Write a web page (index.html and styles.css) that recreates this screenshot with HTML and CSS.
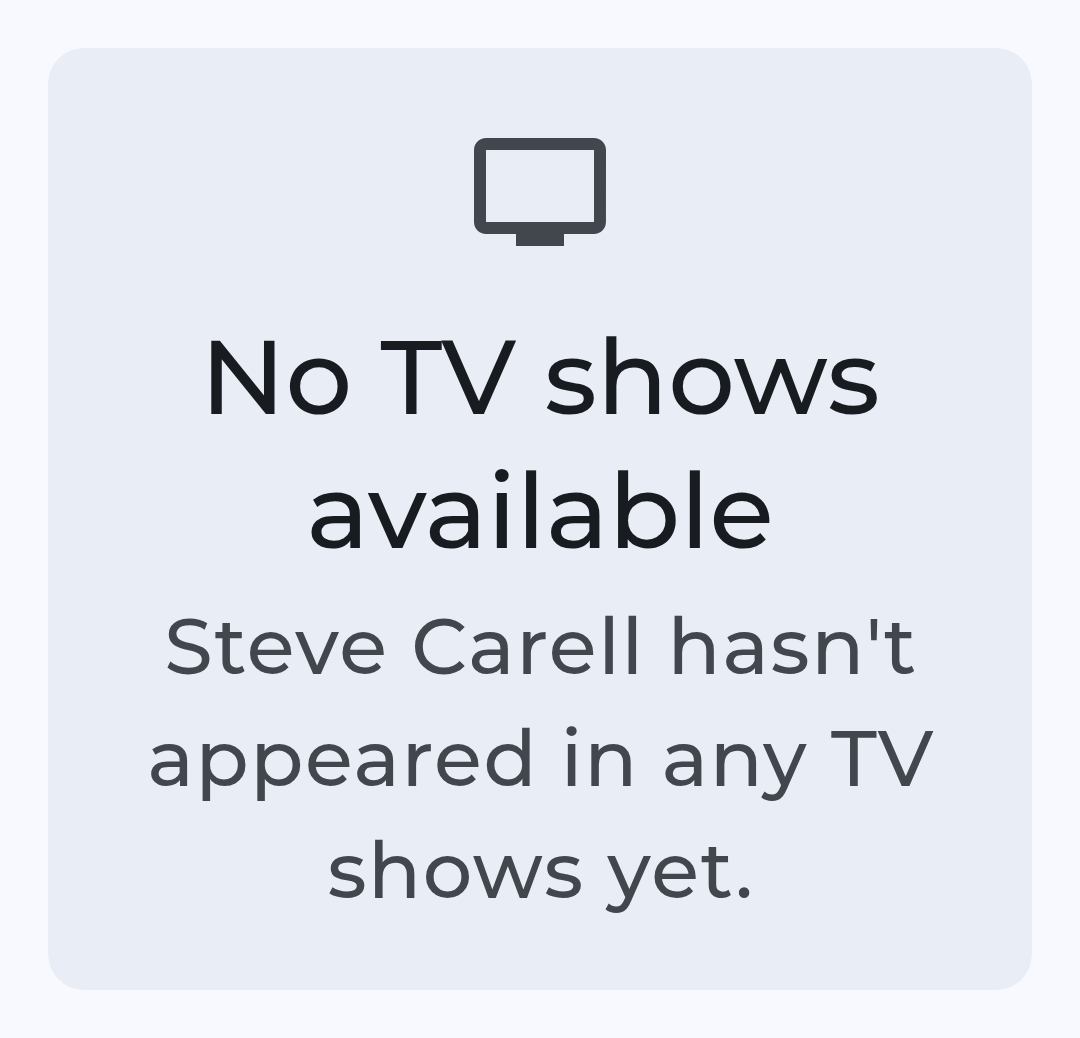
FILE: index.html
```html
<!DOCTYPE html>
<html lang="en">
<head>
<meta charset="utf-8">
<title>TV shows</title>
<link rel="stylesheet" href="styles.css">
</head>
<body>
<main class="card">
<svg class="icon" viewBox="0 0 24 24" aria-hidden="true"><path d="M21 3H3c-1.100 0-2 .9-2 2v12c0 1.100.9 2 2 2h5v2h8v-2h5c1.100 0 1.990-.9 1.990-2L23 5c0-1.100-.9-2-2-2zm0 14H3V5h18v12z"/></svg>
<h1 class="title"><span class="line">No TV shows</span> <span class="line">available</span></h1>
<p class="body"><span class="line">Steve Carell hasn't</span> <span class="line">appeared in any TV</span> <span class="line">shows yet.</span></p>
</main>
</body>
</html>
```

FILE: styles.css
```css
* { box-sizing: border-box; }
body { margin: 0; padding: 48px; height: 1038px; background: #f8f9ff; font-family: Montserrat, Inter, sans-serif; }
.card { height: 942px; padding: 72px; border-radius: 36px; background: #e9eef6; display: flex; flex-direction: column; align-items: center; }
.icon { width: 144px; height: 144px; fill: #42474e; flex: none; }
.title { margin: 45px 0 0; font-size: 105px; line-height: 134px; font-weight: 500; color: #181c20; text-align: center; }
.body { margin: 13px 0 0; padding-left: 2px; font-size: 78px; line-height: 112px; letter-spacing: 1.6px; font-weight: 500; color: #42474e; text-align: center; }
.line { display: block; white-space: nowrap; }
```
